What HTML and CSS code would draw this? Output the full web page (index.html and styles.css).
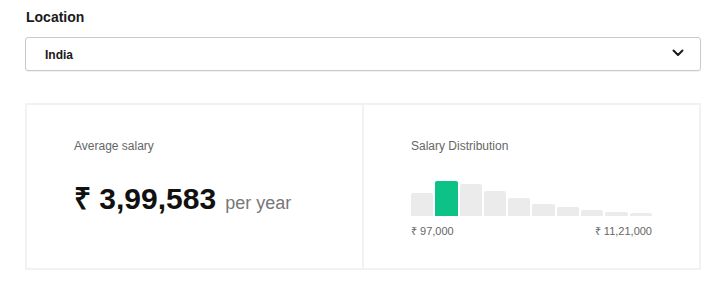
FILE: index.html
```html
<!DOCTYPE HTML>
<html>
<head>
<meta charset="utf-8">
<title>Salary</title>
<link rel="stylesheet" href="styles.css">
</head>

<body>
<div class="page">
	<label class="field-label" for="loc">Location</label>
	<div class="select" id="loc">
		<span class="select-value">India</span>
		<svg class="chevron" width="12" height="8" viewBox="0 0 12 8"><path d="M1.5 1.5 L6 6 L10.5 1.5" fill="none" stroke="#1a1a1a" stroke-width="2" stroke-linecap="round" stroke-linejoin="round"/></svg>
	</div>

	<div class="card">
		<div class="half">
			<div class="caption">Average salary</div>
			<div class="amount"><span class="value">&#8377; 3,99,583</span> <span class="unit">per year</span></div>
		</div>
		<div class="half half-right">
			<div class="caption">Salary Distribution</div>
			<div class="bars">
				<div class="bar" style="height:23px"></div>
				<div class="bar on" style="height:35px"></div>
				<div class="bar" style="height:32px"></div>
				<div class="bar" style="height:25px"></div>
				<div class="bar" style="height:18px"></div>
				<div class="bar" style="height:12px"></div>
				<div class="bar" style="height:9px"></div>
				<div class="bar" style="height:6px"></div>
				<div class="bar" style="height:4px"></div>
				<div class="bar" style="height:3px"></div>
			</div>
			<div class="range">
				<span>&#8377; 97,000</span>
				<span>&#8377; 11,21,000</span>
			</div>
		</div>
	</div>
</div>
</body>
</html>
```

FILE: styles.css
```css
* {margin:0; padding:0; box-sizing:border-box;}
body {font-family:"Liberation Sans", Arial, sans-serif; color:#1a1a1a; background:#fff;}

.page {padding:9px 26px 0 25px;}
.field-label {display:block; font-size:14px; font-weight:bold; line-height:17px; padding-left:1px;}
.select {margin-top:11px; height:34px; border:1px solid #c9c9c9; border-radius:3px; box-shadow:0 1px 1px rgba(0,0,0,0.06); display:flex; align-items:center; justify-content:space-between; padding:0 16px 0 19px;}
.select-value {font-size:12px; font-weight:bold; line-height:14px; padding-top:2px;}
.chevron {display:block; margin-top:-3px;}

.card {margin-top:32px; height:167px; border:2px solid #f2f2f2; display:flex;}
.half {flex:1; padding:34px 0 0 47px;}
.half-right {border-left:2px solid #f2f2f2; padding-left:47px;}
.caption {font-size:12px; line-height:14px; color:#666;}
.amount {margin-top:24px; display:flex; align-items:baseline; gap:9px;}
.value {font-size:30px; font-weight:bold; color:#111;}
.unit {font-size:18px; color:#777;}

.bars {margin-top:28px; width:241px; height:35px; display:flex; align-items:flex-end; gap:2px;}
.bar {flex:1; background:#ebebeb; border-radius:2px 2px 0 0;}
.bar.on {background:#0cc287;}
.range {width:241px; display:flex; justify-content:space-between; margin-top:9px; font-size:11px; line-height:13px; color:#666;}
```
